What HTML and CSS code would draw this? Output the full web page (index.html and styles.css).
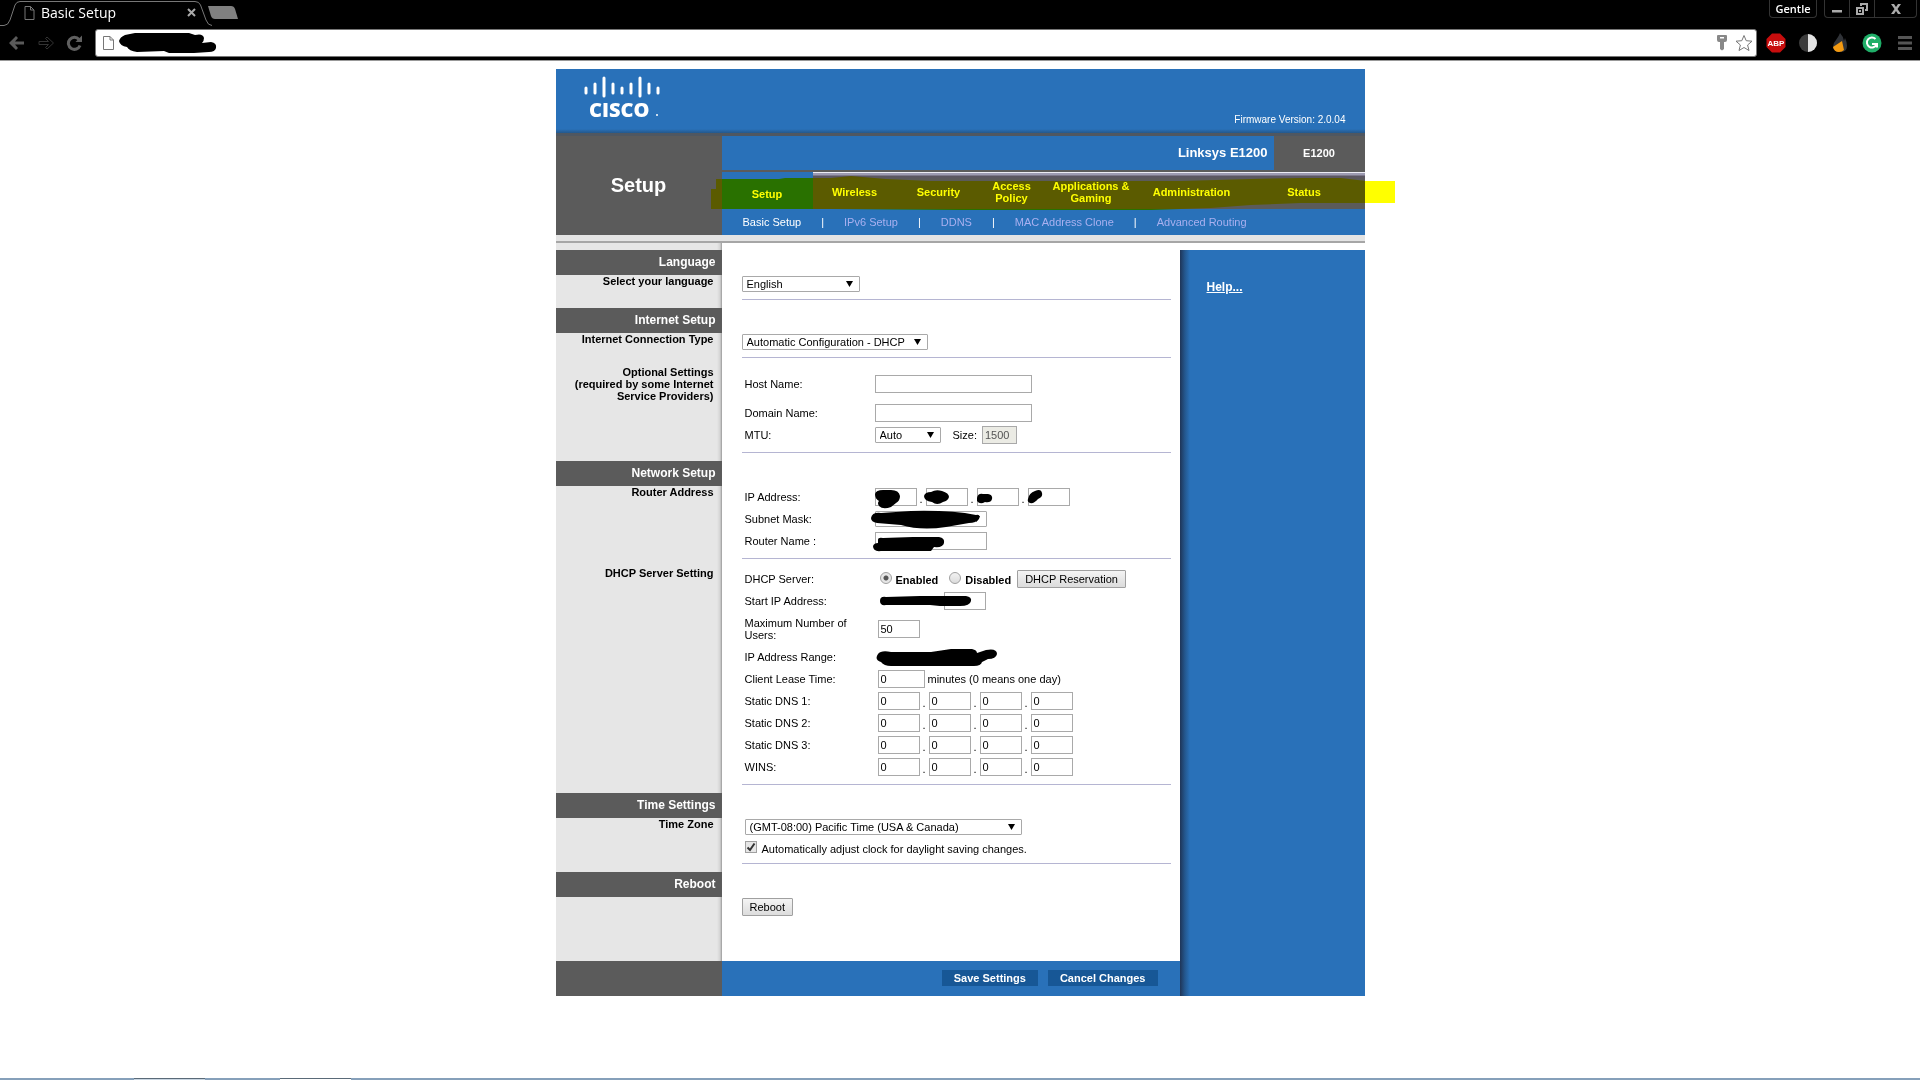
FILE: index.html
```html
<!DOCTYPE html>
<html lang="en">
  <head>
    <meta charset="UTF-8">
    <title>Basic Setup</title>
    <link rel="stylesheet" href="styles.css">
  </head>
  <body>
    <!-- Browser window -->
    <header class="browser">
      <div class="tab-strip">
        <div class="tab">
          <svg class="tab-outline" viewBox="0 0 214 27" aria-hidden="true">
            <path d="M0 25.500H4Q8 25.500 10 20L15 5Q16.500 1.500 20 1.500H195Q199 1.500 200.500 5L206 20Q208 25.500 212 25.500"/>
          </svg>
          <svg class="page-icon" viewBox="0 0 11 14" aria-hidden="true"><path d="M1 .5H6.500L10 4V13.500H1ZM6.500 .5V4H10"/></svg>
          <span class="tab-title">Basic Setup</span>
          <button class="tab-close" aria-label="Close tab"><svg viewBox="0 0 9 9"><path d="M1 1L8 8M8 1L1 8"/></svg></button>
        </div>
        <button class="new-tab" aria-label="New tab"><svg viewBox="0 0 32 15"><path d="M1 1H24Q27 1 28 4L31 14H8Q5 14 4 11Z"/></svg></button>
        <div class="window-buttons">
          <button class="profile">Gentle</button>
          <div class="window-group">
            <button aria-label="Minimize"><svg viewBox="0 0 12 12"><path d="M1 7H11V9.500H1Z"/></svg></button>
            <button aria-label="Restore"><svg viewBox="0 0 12 12"><path fill-rule="evenodd" d="M4 0H12V8H9V6H10V2H6V3H4ZM0 4H8V12H0ZM2 6V10H6V6ZM3 7H5V9H3Z"/></svg></button>
            <button class="wide" aria-label="Close"><svg viewBox="0 0 12 12"><path d="M1 1H4L6 4L8 1H11L7.500 6L11 11H8L6 8L4 11H1L4.500 6Z"/></svg></button>
          </div>
        </div>
      </div>
      <div class="toolbar">
        <button class="nav-button" aria-label="Back"><svg viewBox="0 0 18 16"><path fill="#5a5a5a" d="M1 8L8 1L10 3L7 6.500H16V9.500H7L10 13L8 15Z"/></svg></button>
        <button class="nav-button" aria-label="Forward"><svg viewBox="0 0 18 16"><path stroke="#333" fill="none" d="M16.500 8L10 2L8.500 3.500L11.500 6.500H2V9.500H11.500L8.500 12.500L10 14Z"/></svg></button>
        <button class="nav-button" aria-label="Reload"><svg viewBox="0 0 18 16"><path stroke="#606060" stroke-width="3" fill="none" d="M13 4.500A6 6 0 1 0 14 10.500"/><path fill="#606060" d="M9.500 7H16V.5Z"/></svg></button>
        <div class="address">
          <svg class="page-icon" viewBox="0 0 11 14" aria-hidden="true"><path d="M.5 .5H7L10.500 4V13.500H.5ZM7 .5V4H10.500"/></svg>
          <input class="address-input" type="text" aria-label="Address">
          <svg class="scribble scribble-url" viewBox="0 0 98 22" aria-hidden="true"><path d="M6 2L16 0H70L76 2Q84 0 85 5Q85 8 83 10L92 9Q98 10 97 15Q96 19 90 19L75 20H50L45 18L18 19Q10 18 8 14Q1 13 0 8Q1 4 6 2Z"/></svg>
          <svg class="key" viewBox="0 0 12 16" aria-hidden="true"><path d="M2 0H10Q11 0 11 1V5Q11 7 9 7H8V14L6 15.500L4 14V7H3Q1 7 1 5V1Q1 0 2 0ZM4 2V3.500H8V2Z" fill-rule="evenodd"/></svg>
          <svg class="star" viewBox="0 0 18 18" aria-hidden="true"><path d="M9 1.500L11.200 6.700L17 7.200L12.600 11L14 16.500L9 13.500L4 16.500L5.400 11L1 7.200L6.800 6.700Z"/></svg>
        </div>
        <div class="extensions">
          <svg viewBox="0 0 20 20" role="img" aria-label="Adblock Plus"><path fill="#c70d0d" d="M6 .5H14L19.500 6V14L14 19.500H6L.5 14V6Z"/><text class="abp" x="10" y="13" text-anchor="middle">ABP</text></svg>
          <svg viewBox="0 0 20 20" aria-hidden="true"><circle cx="10" cy="10" r="9" fill="#3c3c3c"/><path fill="#e4e4e4" d="M10 1A9 9 0 0 1 10 19Z"/></svg>
          <svg viewBox="0 0 20 20" aria-hidden="true"><path fill="#303338" d="M10 0Q9 3 6 7Q3 10 3 14Q4 19 10 19Q17 19 17 13Q17 9 15 5L14 8Q13 3 10 0Z"/><path fill="#f39a12" d="M3 14L12 8L14 17Q12 19 9 19Q4 19 3 14Z"/></svg>
          <svg viewBox="0 0 20 20" aria-hidden="true"><circle cx="10" cy="10" r="9.500" fill="#1fae68"/><path fill="none" stroke="#fff" stroke-width="2" d="M13.500 6A5 5 0 1 0 14.500 11.500M10 11H15V14.500"/></svg>
          <button class="menu-button" aria-label="Menu"><svg viewBox="0 0 14 16"><path d="M0 1H14V4H0ZM0 6.500H14V9.500H0ZM0 12H14V15H0Z"/></svg></button>
        </div>
      </div>
    </header>

    <div class="router">
      <div class="banner">
        <svg class="logo" viewBox="0 0 80 50" role="img" aria-label="Cisco">
          <path d="M2 12V17M11 8V17M20 2V20M29 8V17M38 12V17M47 8V17M56 2V20M65 8V17M74 12V17"/>
          <text x="5" y="41">CISCO</text>
          <circle cx="73" cy="39" r="1"/>
        </svg>
        <span class="firmware">Firmware Version: 2.0.04</span>
      </div>

      <div class="masthead">
        <h1>Setup</h1>
        <div class="masthead-main">
          <div class="model">
            <span class="model-name">Linksys E1200</span>
            <span class="model-code">E1200</span>
          </div>
          <nav class="tabs">
            <a class="active" href="#">Setup</a>
            <a href="#">Wireless</a>
            <a href="#">Security</a>
            <a href="#">Access<br>Policy</a>
            <a href="#">Applications &amp;<br>Gaming</a>
            <a href="#">Administration</a>
            <a href="#">Status</a>
            <svg class="marker" viewBox="0 0 684 36" preserveAspectRatio="none" aria-hidden="true">
              <path d="M0 13H5V3H68L74 2H120L140 0L175 3L220 5L340 5L470 5L540 3L590 2L630 2L655 5H684V27H590L540 29L500 32L440 34H250L120 33H0Z"/>
            </svg>
          </nav>
          <nav class="subnav">
            <a class="active" href="#">Basic Setup</a><span>|</span>
            <a href="#">IPv6 Setup</a><span>|</span>
            <a href="#">DDNS</a><span>|</span>
            <a href="#">MAC Address Clone</a><span>|</span>
            <a href="#">Advanced Routing</a>
          </nav>
        </div>
      </div>
      <div class="shelf"></div>

      <div class="main">
        <form class="settings">
          <div class="row spacer"><div class="side"></div><div></div></div>

          <!-- Language -->
          <div class="row heading"><h2>Language</h2></div>
          <div class="row">
            <label class="side" for="language">Select your language</label>
            <div class="fields short">
              <select id="language" class="w-language"><option>English</option></select>
            </div>
          </div>

          <!-- Internet Setup -->
          <div class="row heading"><h2>Internet Setup</h2></div>
          <div class="row">
            <label class="side" for="connection">Internet Connection Type</label>
            <div class="fields short">
              <select id="connection" class="w-connection"><option>Automatic Configuration - DHCP</option></select>
            </div>
          </div>
          <div class="row">
            <div class="side">Optional Settings<br>(required by some Internet<br>Service Providers)</div>
            <div class="fields optional">
              <div class="field roomy">
                <label for="host">Host Name:</label>
                <input id="host" class="w-name" type="text">
              </div>
              <div class="field">
                <label for="domain">Domain Name:</label>
                <input id="domain" class="w-name" type="text">
              </div>
              <div class="field">
                <label for="mtu">MTU:</label>
                <select id="mtu" class="w-mtu"><option>Auto</option></select>
                <label class="size-label" for="size">Size:</label>
                <input id="size" class="w-size" type="text" value="1500" disabled>
              </div>
            </div>
          </div>

          <!-- Network Setup -->
          <div class="row heading"><h2>Network Setup</h2></div>
          <div class="row">
            <div class="side">Router Address</div>
            <div class="fields">
              <div class="field">
                <label for="ip1">IP Address:</label>
                <div class="octets">
                  <input id="ip1" type="text"><span>.</span>
                  <input type="text" aria-label="IP address part 2"><span>.</span>
                  <input type="text" aria-label="IP address part 3"><span>.</span>
                  <input type="text" aria-label="IP address part 4">
                  <svg class="scribble scribble-ip" viewBox="0 0 170 22" aria-hidden="true"><path d="M0 6Q1 2 8 2H16Q24 2 25 8Q25 13 21 15L16 19Q8 22 4 18Q2 15 4 13Q0 11 0 6ZM49 8Q50 4 56 4Q61 1 67 3Q74 5 74 9Q73 13 68 14Q62 18 57 14Q49 13 49 8ZM102 10Q103 5 108 6L113 6Q118 7 117 11Q116 15 110 14Q105 17 102 13ZM153 11Q154 5 160 3Q166 0 167 5Q168 9 163 11Q159 16 155 15Q152 14 153 11Z"/></svg>
                </div>
              </div>
              <div class="field">
                <label for="mask">Subnet Mask:</label>
                <div class="covered">
                  <select id="mask" class="w-mask"><option></option></select>
                  <svg class="scribble scribble-mask" viewBox="0 0 110 20" aria-hidden="true"><path d="M0 8Q1 2 10 3L40 1Q80 0 105 5Q110 4 108 9Q105 13 98 13L75 17Q50 21 30 15L6 13Q0 12 0 8Z"/></svg>
                </div>
              </div>
              <div class="field">
                <label for="router">Router Name :</label>
                <div class="covered">
                  <input id="router" class="w-mask" type="text">
                  <svg class="scribble scribble-name" viewBox="0 0 72 20" aria-hidden="true"><path d="M5 8Q5 5 10 6L40 5H66Q72 6 71 11Q70 16 61 15L58 19H8Q0 20 0 14Q1 11 5 11Z"/></svg>
                </div>
              </div>
            </div>
          </div>
          <div class="row">
            <div class="side">DHCP Server Setting</div>
            <div class="fields dhcp">
              <div class="field">
                <span class="caption">DHCP Server:</span>
                <div class="choices">
                  <input id="dhcp-on" type="radio" name="dhcp" checked><label for="dhcp-on">Enabled</label>
                  <input id="dhcp-off" type="radio" name="dhcp"><label for="dhcp-off">Disabled</label>
                  <button type="button">DHCP Reservation</button>
                </div>
              </div>
              <div class="field">
                <label for="start-ip">Start IP Address:</label>
                <div class="covered start-ip">
                  <input id="start-ip" class="w-octet" type="text">
                  <svg class="scribble scribble-start" viewBox="0 0 92 12" aria-hidden="true"><path d="M0 6Q0 1 6 2L40 1H62L86 1Q92 2 91 6Q90 11 80 11H60L50 10H6Q0 11 0 6Z"/></svg>
                </div>
              </div>
              <div class="field two-line">
                <label for="users">Maximum Number of Users:</label>
                <input id="users" class="w-octet" type="text" value="50">
              </div>
              <div class="field">
                <span class="caption">IP Address Range:</span>
                <div class="covered">
                  <svg class="scribble scribble-range" viewBox="0 0 122 20" aria-hidden="true"><path d="M2 6Q5 2 15 4L55 4L75 1H96Q101 2 101 5L110 2Q121 0 121 6Q120 11 112 11L106 14Q105 18 98 18H15Q8 18 5 14Q-2 12 2 6Z"/></svg>
                </div>
              </div>
              <div class="field">
                <label for="lease">Client Lease Time:</label>
                <input id="lease" class="w-lease" type="text" value="0">
                <span class="hint">minutes (0 means one day)</span>
              </div>
              <div class="field">
                <label for="dns1">Static DNS 1:</label>
                <div class="octets">
                  <input id="dns1" type="text" value="0"><span>.</span>
                  <input type="text" value="0" aria-label="DNS 1 part 2"><span>.</span>
                  <input type="text" value="0" aria-label="DNS 1 part 3"><span>.</span>
                  <input type="text" value="0" aria-label="DNS 1 part 4">
                </div>
              </div>
              <div class="field">
                <label for="dns2">Static DNS 2:</label>
                <div class="octets">
                  <input id="dns2" type="text" value="0"><span>.</span>
                  <input type="text" value="0" aria-label="DNS 2 part 2"><span>.</span>
                  <input type="text" value="0" aria-label="DNS 2 part 3"><span>.</span>
                  <input type="text" value="0" aria-label="DNS 2 part 4">
                </div>
              </div>
              <div class="field">
                <label for="dns3">Static DNS 3:</label>
                <div class="octets">
                  <input id="dns3" type="text" value="0"><span>.</span>
                  <input type="text" value="0" aria-label="DNS 3 part 2"><span>.</span>
                  <input type="text" value="0" aria-label="DNS 3 part 3"><span>.</span>
                  <input type="text" value="0" aria-label="DNS 3 part 4">
                </div>
              </div>
              <div class="field">
                <label for="wins">WINS:</label>
                <div class="octets">
                  <input id="wins" type="text" value="0"><span>.</span>
                  <input type="text" value="0" aria-label="WINS part 2"><span>.</span>
                  <input type="text" value="0" aria-label="WINS part 3"><span>.</span>
                  <input type="text" value="0" aria-label="WINS part 4">
                </div>
              </div>
            </div>
          </div>

          <!-- Time Settings -->
          <div class="row heading"><h2>Time Settings</h2></div>
          <div class="row">
            <label class="side" for="zone">Time Zone</label>
            <div class="fields time">
              <select id="zone" class="w-zone"><option>(GMT-08:00) Pacific Time (USA &amp; Canada)</option></select>
              <div class="check">
                <input id="dst" type="checkbox" checked>
                <label for="dst">Automatically adjust clock for daylight saving changes.</label>
              </div>
            </div>
          </div>

          <!-- Reboot -->
          <div class="row heading"><h2>Reboot</h2></div>
          <div class="row">
            <div class="side"></div>
            <div class="reboot"><button type="button">Reboot</button></div>
          </div>

          <div class="row actions">
            <div class="actions-side"></div>
            <div class="actions-bar">
              <button class="save" type="submit">Save Settings</button>
              <button class="save" type="reset">Cancel Changes</button>
            </div>
          </div>
        </form>
        <aside class="help"><a href="#">Help...</a></aside>
      </div>
    </div>

    <div class="taskbar"><span class="task"></span><span class="task current"></span></div>
  </body>
</html>
```
FILE: styles.css
```css
* {
  box-sizing: border-box;
}

body {
  display: flex;
  flex-direction: column;
  min-height: 100vh;
  margin: 0;
  background: #fff;
  color: #000;
  font-family: "Liberation Sans", Arial, sans-serif;
  font-size: 11px;
  line-height: 12px;
}

h1, h2 {
  margin: 0;
}

a {
  color: inherit;
  text-decoration: none;
}

button, input, select {
  margin: 0;
  font-family: inherit;
  font-size: 11px;
}

/* Browser window */
.browser {
  background: #000;
  border-bottom: 1px solid #999;
}

.browser button {
  display: flex;
  align-items: center;
  justify-content: center;
  padding: 0;
  border: none;
  background: none;
}

.tab-strip {
  display: flex;
  height: 27px;
}

.tab {
  position: relative;
  display: flex;
  align-items: center;
  width: 214px;
  padding: 0 18px 2px 24px;
}

.tab-outline {
  position: absolute;
  inset: 0;
  fill: none;
  stroke: #777;
}

.page-icon {
  width: 11px;
  height: 14px;
  fill: none;
  stroke: #777;
}

.tab-title {
  flex: 1;
  margin-left: 6px;
  color: #fff;
  font-family: "Open Sans", sans-serif;
  font-size: 14px;
  line-height: 20px;
}

.tab-close svg {
  width: 9px;
  height: 9px;
  stroke: #aaa;
  stroke-width: 2;
}

.browser .new-tab {
  margin-left: -7px;
}

.new-tab svg {
  width: 32px;
  height: 15px;
  margin-bottom: 2px;
  fill: #808080;
}

.window-buttons {
  display: flex;
  gap: 7px;
  margin-left: auto;
  padding-right: 3px;
}

.window-buttons .profile {
  width: 48px;
  height: 18px;
  border: 1px solid #333;
  border-top: none;
  border-radius: 0 0 4px 4px;
  color: #fff;
  font-family: "Open Sans", sans-serif;
  font-weight: 600;
}

.window-group {
  display: flex;
  height: 18px;
  border: 1px solid #333;
  border-top: none;
  border-radius: 0 0 4px 4px;
}

.window-group button {
  width: 25px;
  border-right: 1px solid #333;
}

.window-group .wide {
  width: 41px;
  border-right: none;
}

.window-group svg {
  width: 12px;
  height: 12px;
  fill: #aaa;
}

.toolbar {
  display: flex;
  align-items: center;
  height: 33px;
  padding: 0 8px 2px;
}

.nav-button svg {
  width: 18px;
  height: 16px;
  margin-right: 11px;
}

.address {
  position: relative;
  display: flex;
  flex: 1;
  align-items: center;
  height: 28px;
  padding: 0 3px 0 7px;
  border: 1px solid #777;
  border-radius: 3px;
  background: #fff;
}

.address-input {
  flex: 1;
  border: none;
  outline: none;
}

.key {
  width: 12px;
  height: 16px;
  margin-right: 7px;
  fill: #888;
}

.star {
  width: 18px;
  height: 18px;
  fill: none;
  stroke: #777;
}

.extensions {
  display: flex;
  align-items: center;
  gap: 12px;
  padding-left: 9px;
}

.extensions svg {
  width: 20px;
  height: 20px;
}

.abp {
  fill: #fff;
  font-size: 8px;
  font-weight: bold;
}

.extensions .menu-button svg {
  width: 14px;
  height: 16px;
  margin-left: 4px;
  fill: #555;
}

/* Blacked out values */
.scribble {
  position: absolute;
  fill: #000;
}

.scribble-url {
  left: 23px;
  top: 3px;
  width: 98px;
}

.scribble-ip {
  left: 0;
  top: 0;
  width: 170px;
}

.scribble-mask {
  left: -4px;
  top: -1px;
  width: 110px;
}

.scribble-name {
  left: -2px;
  top: 0;
  width: 72px;
}

.scribble-start {
  left: 2px;
  top: 3px;
  width: 92px;
}

.scribble-range {
  left: -2px;
  top: -9px;
  width: 122px;
}

/* Router page */
.router {
  width: 100%;
  max-width: 809px;
  margin: 8px auto auto;
}

.banner {
  display: flex;
  align-items: flex-start;
  justify-content: space-between;
  height: 67px;
  padding: 7px 19px 0 28px;
  border-bottom: 3px solid #4f5761;
  background: linear-gradient(#2971b9 60px, #24588c);
}

.logo {
  width: 80px;
  height: 50px;
  fill: #fff;
}

.logo path {
  stroke: #fff;
  stroke-width: 3;
  stroke-linecap: round;
}

.logo text {
  font-family: "Open Sans", sans-serif;
  font-size: 20px;
  font-weight: 800;
}

.firmware {
  padding-top: 38px;
  color: #fff;
  font-size: 10px;
}

.masthead {
  display: grid;
  grid-template-columns: 166px 1fr;
  background: #5b5b5b;
  color: #fff;
}

.masthead h1 {
  align-self: center;
  padding-bottom: 2px;
  font-size: 20px;
  line-height: 24px;
  text-align: center;
}

.model {
  display: flex;
  font-weight: bold;
  line-height: 34px;
}

.model-name {
  flex: 1;
  padding-right: 6px;
  border-bottom: 2px solid #5b5b5b;
  background: #2971b9;
  font-size: 13px;
  text-align: right;
}

.model-code {
  width: 91px;
  text-align: center;
}

.tabs {
  position: relative;
  display: grid;
  grid-template-columns: 91fr 84fr 84fr 62fr 97fr 104fr 121fr;
  font-weight: bold;
}

.tabs a {
  display: flex;
  align-items: center;
  justify-content: center;
  height: 37px;
  padding-top: 2px;
  background: linear-gradient(#ececf4 1px, #9d9bb2 1px, #9d9bb2 3px, #5b5563 4px, #5b5b5b 8px);
  text-align: center;
}

.tabs .active {
  padding-top: 6px;
  background: #2971b9;
}

/* Yellow highlighter stroke */
.marker {
  position: absolute;
  left: -11px;
  top: 4px;
  width: calc(100% + 41px);
  height: 36px;
  fill: #ff0;
  mix-blend-mode: multiply;
  pointer-events: none;
}

.subnav {
  display: flex;
  gap: 20px;
  padding: 7px 21px;
  background: #2971b9;
}

.subnav a {
  color: #a9b0f0;
}

.subnav .active {
  color: #fff;
}

.shelf {
  height: 8px;
  border-bottom: 2px solid #a6a6a6;
  background: #e4e4e4;
}

.main {
  display: grid;
  grid-template-columns: 1fr 185px;
}

.row {
  display: grid;
  grid-template-columns: 166px 1fr;
}

.side {
  padding-right: 8px;
  background: linear-gradient(to left, #999, #d4d4d4 2px, #e6e6e6 5px);
  font-weight: bold;
  text-align: right;
}

.spacer {
  height: 7px;
}

.heading h2 {
  padding-right: 6px;
  background: #5b5b5b;
  color: #fff;
  font-size: 12px;
  line-height: 25px;
  text-align: right;
}

.fields {
  display: flex;
  flex-direction: column;
  gap: 4px;
  margin: 0 9px 8px 20px;
  padding: 2px 0 8px;
  border-bottom: 1px solid #b5b5d2;
}

.fields.short {
  padding: 1px 0 7px;
}

.fields.optional {
  padding-top: 9px;
}

.fields.dhcp {
  padding-top: 3px;
}

.fields.time {
  padding-top: 1px;
}

.field {
  display: flex;
  align-items: center;
  min-height: 18px;
  padding-left: 3px;
}

.field.roomy {
  margin-bottom: 7px;
}

.field.two-line {
  padding-top: 3px;
  padding-bottom: 3px;
}

.field > label:first-child,
.caption {
  width: 130px;
  padding-right: 20px;
}

.dhcp .field > label:first-child,
.dhcp .caption {
  width: 133px;
}

input[type="text"] {
  height: 18px;
  padding: 0 2px;
  border: 1px solid #a9a9a9;
}

input[type="text"]:disabled {
  background: #ebebe4;
  color: #545454;
}

.browser .address-input {
  border: none;
}

select {
  height: 16px;
  padding: 0 16px 0 4px;
  border: 1px solid #a9a9a9;
  border-radius: 1px;
  appearance: none;
  background: #fff url("data:image/svg+xml,%3Csvg xmlns='http://www.w3.org/2000/svg' width='7' height='6'%3E%3Cpath d='M0 0H7L3.500 6Z'/%3E%3C/svg%3E") no-repeat right 6px center;
  color: #000;
}

.w-language { width: 118px; }
.w-connection { width: 186px; }
.w-name { width: 157px; }
.w-mtu { width: 66px; }
.w-size { width: 35px; }
.w-mask { width: 112px; }
.w-octet { width: 42px; }
.w-lease { width: 47px; }
.w-zone { width: 277px; }

.size-label {
  margin: 0 5px 0 12px;
}

.hint {
  margin-left: 3px;
}

.octets,
.covered {
  position: relative;
  display: flex;
  align-items: center;
}

.octets input {
  width: 42px;
}

.octets span {
  width: 9px;
  padding-top: 3px;
  text-align: center;
}

.start-ip {
  padding-left: 66px;
}

.choices {
  display: flex;
  align-items: center;
  font-weight: bold;
}

.choices label {
  margin: 2px 9px 0 4px;
}

.choices label + button {
  margin-left: -3px;
}

input[type="radio"],
input[type="checkbox"] {
  width: 12px;
  height: 12px;
  border: 1px solid #a0a0a0;
  appearance: none;
  background: linear-gradient(#f2f2f2, #dcdcdc);
}

input[type="radio"] {
  margin: 0 0 3px 2px;
  border-radius: 50%;
}

input[type="radio"]:checked {
  background: radial-gradient(#555 2px, #e6e6e6 3px);
}

input[type="checkbox"]:checked {
  background: #e6e6e6 url("data:image/svg+xml,%3Csvg xmlns='http://www.w3.org/2000/svg' width='10' height='10'%3E%3Cpath d='M1.500 5.500L4 8L8.500 1.500' fill='none' stroke='%23333' stroke-width='2'/%3E%3C/svg%3E") no-repeat center;
}

.settings button {
  height: 18px;
  padding: 0 7px;
  border: 1px solid #a0a0a0;
  border-radius: 1px;
  background: linear-gradient(#f4f4f4, #dcdcdc);
  color: #000;
}

.time select,
.check {
  margin-left: 3px;
}

.check {
  display: flex;
  align-items: center;
  gap: 5px;
  height: 16px;
}

.check label {
  padding-top: 3px;
}

.reboot {
  padding: 1px 20px 45px;
}

.actions-side {
  background: #5b5b5b;
}

.actions-bar {
  display: flex;
  justify-content: flex-end;
  gap: 10px;
  padding: 9px 22px 10px;
  background: #2971b9;
}

.settings .save {
  height: 16px;
  padding: 0 12px;
  border: none;
  border-radius: 0;
  background: #175796;
  color: #fff;
  font-weight: bold;
}

.help {
  margin-top: 7px;
  padding: 31px 27px;
  background: linear-gradient(to right, #1f3557, #24588f 5px, #2971b9 10px);
  color: #fff;
  font-size: 12px;
  font-weight: bold;
}

.help a {
  text-decoration: underline;
}

/* Top edge of the taskbar */
.taskbar {
  display: flex;
  gap: 75px;
  height: 2px;
  padding-left: 134px;
  background: #86a0ba;
}

.task {
  width: 71px;
  border-top: 1px solid #5a6a78;
  background: #c9d6e2;
}

.task.current {
  background: #fff;
}
```
